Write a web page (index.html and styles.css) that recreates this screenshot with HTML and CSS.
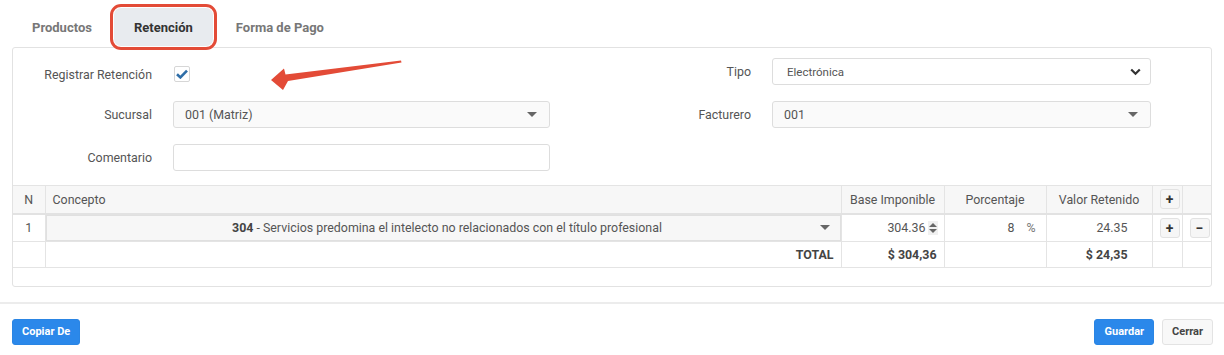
FILE: index.html
```html
<!DOCTYPE html>
<html lang="es">
<head>
    <meta charset="UTF-8">
    <title>Retención</title>
    <link rel="stylesheet" href="styles.css">
</head>
<body>
    <div class="tabs">
        <a class="tab">Productos</a>
        <a class="tab active">Retención</a>
        <a class="tab">Forma de Pago</a>
    </div>

    <div class="panel">
        <div class="form-grid">
            <label class="lbl low">Registrar Retención</label>
            <div class="field low">
                <span class="check">
                    <svg width="12" height="10" viewBox="0 0 12 10"><path d="M1 5.2 L4.4 8.4 L11 1.6" fill="none" stroke="#2f6ea8" stroke-width="2.6" stroke-linejoin="miter"/></svg>
                </span>
            </div>
            <label class="lbl">Tipo</label>
            <div class="select native">
                <span>Electrónica</span>
                <svg class="chev" width="11" height="8" viewBox="0 0 11 8"><path d="M1.2 1.5 L5.5 5.8 L9.8 1.5" fill="none" stroke="#333" stroke-width="2.2"/></svg>
            </div>

            <label class="lbl">Sucursal</label>
            <div class="select">
                <span>001 (Matriz)</span>
                <i class="caret"></i>
            </div>
            <label class="lbl">Facturero</label>
            <div class="select">
                <span>001</span>
                <i class="caret"></i>
            </div>

            <label class="lbl">Comentario</label>
            <input class="input" type="text">
        </div>

        <table class="ret-table">
            <colgroup>
                <col style="width:32px">
                <col>
                <col style="width:103px">
                <col style="width:102px">
                <col style="width:106px">
                <col style="width:30px">
                <col style="width:29px">
            </colgroup>
            <thead>
                <tr>
                    <th class="c">N</th>
                    <th class="l">Concepto</th>
                    <th class="c">Base Imponible</th>
                    <th class="c">Porcentaje</th>
                    <th class="c">Valor Retenido</th>
                    <th class="c"><span class="mini">+</span></th>
                    <th></th>
                </tr>
            </thead>
            <tbody>
                <tr class="row">
                    <td class="c">1</td>
                    <td class="concept">
                        <div class="concept-select">
                            <span><b>304</b> - Servicios predomina el intelecto no relacionados con el título profesional</span>
                            <i class="caret"></i>
                        </div>
                    </td>
                    <td class="r base">304.36<span class="spin"><i class="up"></i><i class="down"></i></span></td>
                    <td class="r pct">8 <span class="unit">%</span></td>
                    <td class="r val">24.35</td>
                    <td class="c"><span class="mini">+</span></td>
                    <td class="c"><span class="mini minus">&minus;</span></td>
                </tr>
                <tr class="total">
                    <td></td>
                    <td class="r"><b>TOTAL</b></td>
                    <td class="r"><b>$ 304,36</b></td>
                    <td></td>
                    <td class="r val"><b>$ 24,35</b></td>
                    <td></td>
                    <td></td>
                </tr>
            </tbody>
        </table>
    </div>

    <div class="footer">
        <button class="btn btn-primary">Copiar De</button>
        <div class="actions">
            <button class="btn btn-primary">Guardar</button>
            <button class="btn btn-default">Cerrar</button>
        </div>
    </div>

    <!-- annotation arrow -->
    <svg class="arrow" width="1224" height="355" viewBox="0 0 1224 355">
        <polygon points="271,80 284,68.5 285.5,74.5 401,60.5 401.5,62.5 288,81 283,90" fill="#e34b37"/>
    </svg>
</body>
</html>
```

FILE: styles.css
```css
* {
    margin: 0;
    padding: 0;
    box-sizing: border-box;
}

body {
    font-family: Roboto, 'Liberation Sans', Arial, sans-serif;
    font-size: 12.4px;
    color: #555;
    background: #fff;
    width: 1224px;
    height: 355px;
    position: relative;
    overflow: hidden;
}

/* tabs */
.tabs {
    display: flex;
    padding: 8px 0 0 12px;
    height: 47px;
}

.tab {
    display: flex;
    align-items: center;
    height: 38px;
    padding: 0 20px;
    font-size: 13px;
    font-weight: bold;
    color: #777;
    border-radius: 6px;
}

.tab.active {
    background: #e8ebef;
    color: #333;
    margin: 0 2px;
    outline: 3px solid #e34b37;
    outline-offset: 1px;
    border-radius: 7px;
}

.tab:last-child {
    padding-left: 21px;
}

/* panel */
.panel {
    margin: 0 12px;
    border: 1px solid #e2e2e2;
    border-radius: 3px;
    padding: 10px 0 18px;
}

.form-grid {
    display: grid;
    grid-template-columns: 139px 377px 180px 379px;
    grid-auto-rows: 27px;
    column-gap: 21px;
    row-gap: 16px;
    margin-bottom: 14px;
}

.lbl {
    display: flex;
    align-items: center;
    justify-content: flex-end;
    color: #555;
}

.low {
    padding-top: 5px;
}

.field {
    display: flex;
    align-items: center;
}

.check {
    width: 16px;
    height: 16px;
    border: 1px solid #d6d6d6;
    border-radius: 2px;
    display: flex;
    align-items: center;
    justify-content: center;
    margin-left: 1px;
}

.select {
    display: flex;
    align-items: center;
    justify-content: space-between;
    border: 1px solid #ddd;
    border-radius: 3px;
    background: #fafafa;
    padding: 0 12px 0 11px;
    color: #555;
}

.select.native {
    background: #fff;
    padding-left: 14px;
    padding-right: 9px;
    font-size: 11.5px;
}

.caret {
    width: 0;
    height: 0;
    border-left: 5px solid transparent;
    border-right: 5px solid transparent;
    border-top: 5px solid #666;
}

.input {
    border: 1px solid #ddd;
    border-radius: 3px;
    background: #fff;
    font: inherit;
}

/* table */
.ret-table {
    width: 100%;
    border-collapse: collapse;
    table-layout: fixed;
}

.ret-table th,
.ret-table td {
    border: 1px solid #e4e4e4;
    padding: 0 7px;
    font-weight: normal;
    color: #555;
    white-space: nowrap;
}

.ret-table th {
    background: #f7f7f7;
    height: 28px;
    border-bottom: 2px solid #e2e2e2;
}

.ret-table th:first-child,
.ret-table td:first-child {
    border-left: none;
}

.ret-table th:last-child,
.ret-table td:last-child {
    border-right: none;
}

.ret-table .row td {
    height: 27px;
}

.ret-table .total td {
    height: 26px;
}

.c { text-align: center; }
.l { text-align: left; }
.r { text-align: right; }

.ret-table td.concept {
    padding: 0;
}

.concept-select {
    display: flex;
    align-items: center;
    height: 26px;
    background: #f7f7f7;
    border: 1px solid #e0e0e0;
    padding: 0 10px 0 28px;
}

.concept-select span {
    flex: 1;
    text-align: center;
}

.concept-select b {
    font-weight: bold;
    color: #444;
}

.ret-table td.base {
    padding-right: 6px;
}

.spin {
    display: inline-flex;
    flex-direction: column;
    gap: 2px;
    vertical-align: middle;
    margin-left: 2px;
    padding: 2px 1px;
    background: #f0f0f0;
}

.spin i {
    width: 0;
    height: 0;
    border-left: 4px solid transparent;
    border-right: 4px solid transparent;
}

.spin .up { border-bottom: 4px solid #666; }
.spin .down { border-top: 4px solid #666; }

.ret-table td.pct {
    padding-right: 10px;
}

.unit {
    margin-left: 9px;
    color: #777;
}

.ret-table td.val {
    padding-right: 24px;
}

.total b {
    font-weight: bold;
    color: #444;
}

.mini {
    display: inline-flex;
    align-items: center;
    justify-content: center;
    width: 20px;
    height: 20px;
    border: 1px solid #e2e2e2;
    border-radius: 3px;
    background: #f6f6f6;
    font-weight: bold;
    font-size: 14px;
    color: #333;
    vertical-align: middle;
}

/* footer */
.footer {
    margin-top: 15px;
    border-top: 2px solid #ececec;
    padding: 15px 11px 0 12px;
    display: flex;
    justify-content: space-between;
}

.actions {
    display: flex;
    gap: 8px;
}

.btn {
    height: 26px;
    padding: 0 9px;
    border-radius: 3px;
    font-family: inherit;
    font-size: 11px;
    font-weight: bold;
    border: 1px solid transparent;
}

.btn-primary {
    background: #2b88ea;
    color: #fff;
    border-color: #2a85e4;
}

.btn-default {
    background: #f8f8f8;
    color: #444;
    border-color: #e3e3e3;
}

.arrow {
    position: absolute;
    left: 0;
    top: 0;
    pointer-events: none;
}
```
